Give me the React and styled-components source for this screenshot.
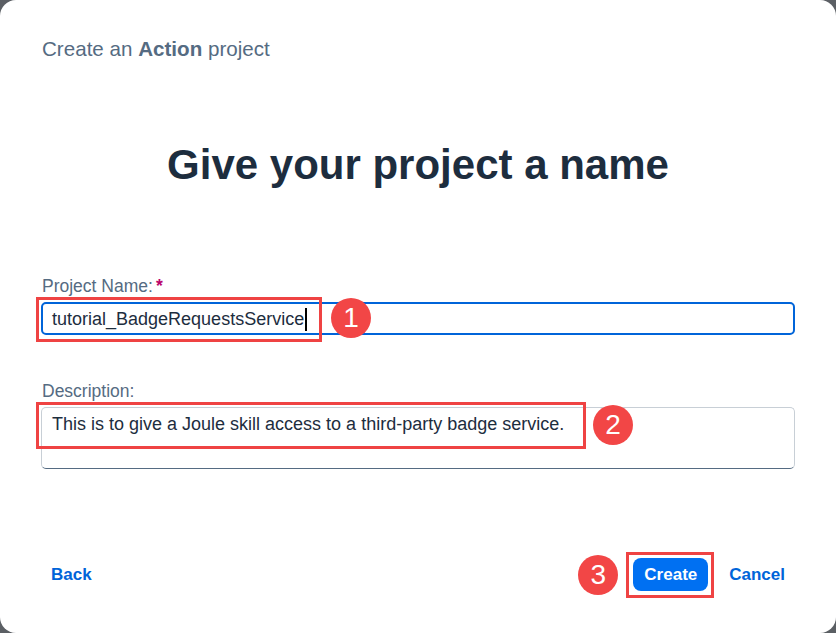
import React from 'react';
import styled, { createGlobalStyle } from 'styled-components';

const GlobalStyle = createGlobalStyle`
  html, body {
    margin: 0;
    padding: 0;
    background: #5b5f64;
  }
  body {
    font-family: "Liberation Sans", Arial, sans-serif;
  }
`;

const Dialog = styled.div`
  width: 836px;
  height: 633px;
  box-sizing: border-box;
  background: #ffffff;
  border-radius: 16px;
  display: flex;
  flex-direction: column;
  padding: 0 41px;
`;

const Subtitle = styled.div`
  margin-top: 38px;
  padding-left: 1px;
  font-size: 20.6px;
  line-height: 22px;
  color: #556b82;

  b {
    font-weight: 700;
  }
`;

const Heading = styled.h1`
  margin: 80px 0 0;
  text-align: center;
  font-size: 42px;
  line-height: 50px;
  font-weight: 700;
  color: #1d2d3e;
`;

const Field = styled.div`
  display: flex;
  flex-direction: column;
  margin-top: ${(props) => props.top}px;
`;

const Label = styled.label`
  font-size: 17.5px;
  line-height: 20px;
  color: #556b82;
  margin-bottom: 6px;
  padding-left: 1px;
`;

const Required = styled.span`
  color: #ba066c;
  font-weight: 700;
  margin-left: 3px;
`;

const Annotated = styled.div`
  position: relative;
`;

const Box = styled.div`
  box-sizing: border-box;
  height: ${(props) => props.height}px;
  border: ${(props) => (props.focused ? '2px solid #0064d9' : '1px solid #c8cfd6')};
  border-bottom-color: ${(props) => (props.focused ? '#0064d9' : '#556b82')};
  border-radius: 5px;
  padding: ${(props) => (props.focused ? '5px 9px' : '6px 10px')};
  font-size: 18px;
  line-height: 20px;
  color: #1d2d3e;
  display: flex;
  align-items: flex-start;
`;

const Value = styled.span`
  white-space: nowrap;
`;

const Caret = styled.span`
  display: inline-block;
  width: 2px;
  height: 23px;
  background: #000;
  margin-left: 1px;
  margin-top: -1px;
`;

const Highlight = styled.div`
  position: absolute;
  left: ${(props) => props.left}px;
  top: ${(props) => props.top}px;
  width: ${(props) => props.width}px;
  height: ${(props) => props.height}px;
  border: 3px solid #ef4343;
  box-sizing: border-box;
  pointer-events: none;
`;

const Marker = styled.div`
  position: absolute;
  left: ${(props) => props.left}px;
  top: ${(props) => props.top}px;
  width: 40px;
  height: 40px;
  border-radius: 50%;
  background: #f24646;
  color: #ffffff;
  font-family: "Liberation Sans", Arial, sans-serif;
  font-size: 28px;
  font-weight: 400;
  line-height: 40px;
  text-align: center;
`;

const Footer = styled.div`
  margin-top: auto;
  margin-bottom: 42px;
  display: flex;
  align-items: center;
  justify-content: space-between;
  padding: 0 10px;
`;

const Actions = styled.div`
  display: flex;
  align-items: center;
  gap: 21px;
`;

const LinkButton = styled.button`
  background: none;
  border: none;
  padding: 0;
  font-family: "Liberation Sans", Arial, sans-serif;
  font-size: 17px;
  font-weight: 700;
  color: #0064d9;
  cursor: pointer;
`;

const PrimaryButton = styled.button`
  height: 33px;
  padding: 0 11px;
  border: none;
  border-radius: 8px;
  background: #0070f2;
  color: #ffffff;
  font-family: "Liberation Sans", Arial, sans-serif;
  font-size: 17px;
  font-weight: 700;
  cursor: pointer;
`;

export default function App() {
  return (
    <>
      <GlobalStyle />
      <Dialog>
        <Subtitle>
          Create an <b>Action</b> project
        </Subtitle>
        <Heading>Give your project a name</Heading>

        <Field top={86}>
          <Label>
            Project Name:<Required>*</Required>
          </Label>
          <Annotated>
            <Box height={33} focused>
              <Value>tutorial_BadgeRequestsService</Value>
              <Caret />
            </Box>
            <Highlight left={-5} top={-5} width={286} height={45} />
            <Marker left={290} top={-4}>1</Marker>
          </Annotated>
        </Field>

        <Field top={46}>
          <Label>Description:</Label>
          <Annotated>
            <Box height={62}>
              <Value>This is to give a Joule skill access to a third-party badge service.</Value>
            </Box>
            <Highlight left={-5} top={-5} width={550} height={47} />
            <Marker left={552} top={-2}>2</Marker>
          </Annotated>
        </Field>

        <Footer>
          <LinkButton>Back</LinkButton>
          <Actions>
            <Annotated>
              <PrimaryButton>Create</PrimaryButton>
              <Highlight left={-7} top={-6} width={88} height={46} />
              <Marker left={-55} top={-3}>3</Marker>
            </Annotated>
            <LinkButton>Cancel</LinkButton>
          </Actions>
        </Footer>
      </Dialog>
    </>
  );
}
